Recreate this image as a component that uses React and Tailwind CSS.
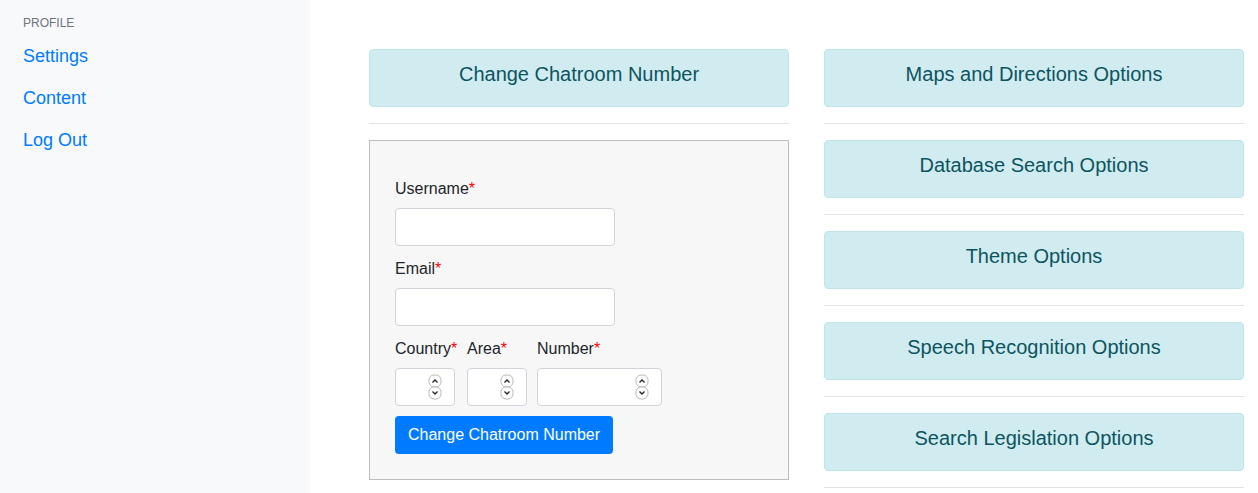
import React from 'react';

const font = { fontFamily: '"Liberation Sans", Arial, sans-serif' };

const Spinner = () => (
  <svg width="14" height="26" viewBox="0 0 14 26" className="absolute right-[12px] top-[5px]">
    <rect x="1" y="1" width="12" height="12" rx="5" fill="#fff" stroke="#b9b9b9" />
    <rect x="1" y="13" width="12" height="12" rx="5" fill="#fff" stroke="#b9b9b9" />
    <path d="M4.5 8.5 L7 6 L9.5 8.5" fill="none" stroke="#222" strokeWidth="1.3" />
    <path d="M4.5 17.5 L7 20 L9.5 17.5" fill="none" stroke="#222" strokeWidth="1.3" />
  </svg>
);

const Heading = ({ children }) => (
  <>
    <div className="h-[58px] border border-[#bee5eb] bg-[#d1ecf1] text-[#0c5460] rounded-[4px] text-[20px] leading-[30px] text-center pt-[9px]">
      {children}
    </div>
    <div className="my-4 border-t border-[#e3e3e3]" />
  </>
);

const Label = ({ children }) => (
  <label className="block whitespace-nowrap text-[16px] leading-[24px] text-[#212529] pt-[1px] mb-[7px]">
    {children}
    <span className="text-[#ff0000]">*</span>
  </label>
);

const TextInput = () => (
  <input className="block w-[220px] h-[38px] bg-white border border-[#ced4da] rounded-[4px] mb-[10px]" />
);

const NumInput = () => (
  <div className="relative h-[38px] bg-white border border-[#ced4da] rounded-[4px]">
    <Spinner />
  </div>
);

export default function App() {
  const rightItems = [
    'Maps and Directions Options',
    'Database Search Options',
    'Theme Options',
    'Speech Recognition Options',
    'Search Legislation Options',
  ];

  return (
    <div className="flex w-[1258px] h-[493px] overflow-hidden bg-white" style={font}>
      <aside className="w-[310px] h-full bg-[#f8f9fa] px-[23px] pt-[15px]">
        <div className="text-[12px] leading-[16px] text-[#6c757d] uppercase">Profile</div>
        <nav className="mt-[4px] flex flex-col">
          {['Settings', 'Content', 'Log Out'].map((t) => (
            <a key={t} href="#" className="text-[18px] leading-[42px] text-[#007bff]">
              {t}
            </a>
          ))}
        </nav>
      </aside>

      <main className="flex-1 flex gap-[35px] pl-[59px] pt-[49px]">
        <div className="w-[420px]">
          <Heading>Change Chatroom Number</Heading>
          <div className="border border-[#bdbdbd] bg-[#f7f7f7] pt-[35px] px-[25px] pb-[25px]">
            <Label>Username</Label>
            <TextInput />
            <Label>Email</Label>
            <TextInput />
            <div className="flex">
              <div className="w-[60px] mr-[12px]">
                <Label>Country</Label>
                <NumInput />
              </div>
              <div className="w-[60px] mr-[10px]">
                <Label>Area</Label>
                <NumInput />
              </div>
              <div className="w-[125px]">
                <Label>Number</Label>
                <NumInput />
              </div>
            </div>
            <button className="mt-[10px] h-[38px] px-[13px] bg-[#007bff] text-white text-[16px] rounded-[4px]">
              Change Chatroom Number
            </button>
          </div>
        </div>

        <div className="w-[420px]">
          {rightItems.map((t) => (
            <Heading key={t}>{t}</Heading>
          ))}
        </div>
      </main>
    </div>
  );
}
